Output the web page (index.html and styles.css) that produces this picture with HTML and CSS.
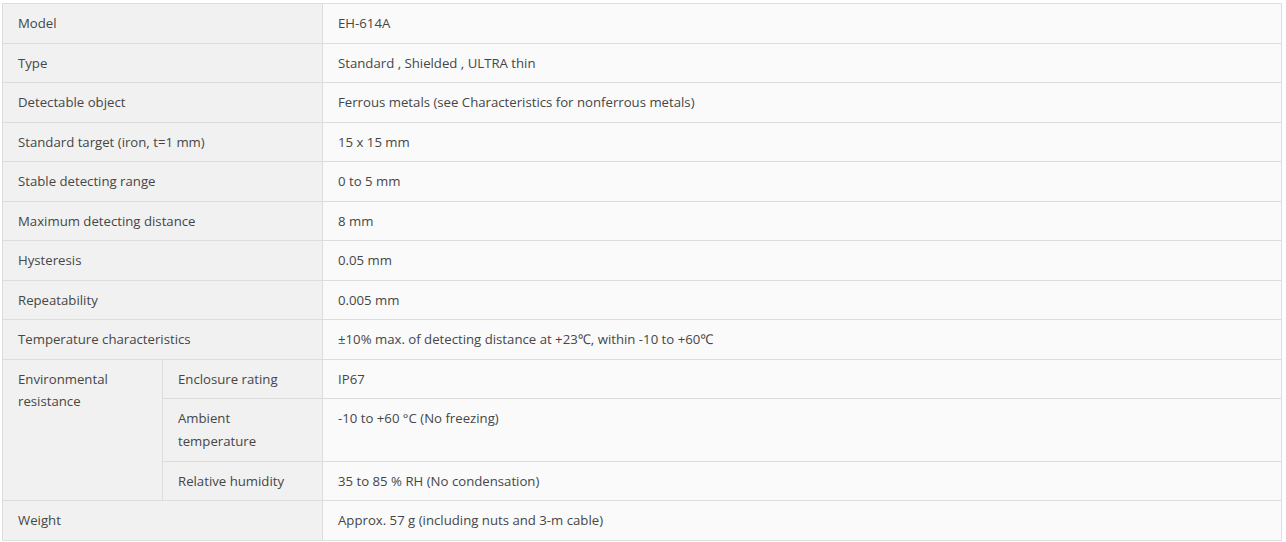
FILE: index.html
```html
<!DOCTYPE html>
<html>
<head>
<meta charset="utf-8">
<link rel="stylesheet" href="styles.css">
</head>
<body>
<div class="wrap">
<table class="spec">
<colgroup><col class="col-a"><col class="col-b"><col></colgroup>
<tr><th colspan="2">Model</th><td>EH-614A</td></tr>
<tr><th colspan="2">Type</th><td>Standard , Shielded , ULTRA thin</td></tr>
<tr><th colspan="2">Detectable object</th><td>Ferrous metals (see Characteristics for nonferrous metals)</td></tr>
<tr><th colspan="2">Standard target (iron, t=1 mm)</th><td>15 x 15 mm</td></tr>
<tr><th colspan="2">Stable detecting range</th><td>0 to 5 mm</td></tr>
<tr><th colspan="2">Maximum detecting distance</th><td>8 mm</td></tr>
<tr><th colspan="2">Hysteresis</th><td>0.05 mm</td></tr>
<tr><th colspan="2">Repeatability</th><td>0.005 mm</td></tr>
<tr><th colspan="2">Temperature characteristics</th><td>±10% max. of detecting distance at +23℃, within -10 to +60℃</td></tr>
<tr><th rowspan="3">Environmental resistance</th><th>Enclosure rating</th><td>IP67</td></tr>
<tr><th>Ambient temperature</th><td>-10 to +60 °C (No freezing)</td></tr>
<tr><th>Relative humidity</th><td>35 to 85 % RH (No condensation)</td></tr>
<tr><th colspan="2">Weight</th><td>Approx. 57 g (including nuts and 3-m cable)</td></tr>
</table>
</div>
</body>
</html>
```

FILE: styles.css
```css
html, body {
  margin: 0;
  padding: 0;
  background: #ffffff;
}
.wrap {
  padding: 3px 4px 2px 2px;
}
.spec {
  width: 100%;
  border-collapse: collapse;
  table-layout: fixed;
  font-family: "Open Sans", "Noto Sans", sans-serif;
  font-size: 13.2px;
  line-height: 22.55px;
  color: #464646;
}
.col-a, .col-b {
  width: 160px;
}
.spec th, .spec td {
  border: 1px solid #dddddd;
  padding: 8px 15px;
  text-align: left;
  vertical-align: top;
  font-weight: normal;
}
.spec th {
  background: #f1f1f1;
}
.spec td {
  background: #fafafa;
}
```
